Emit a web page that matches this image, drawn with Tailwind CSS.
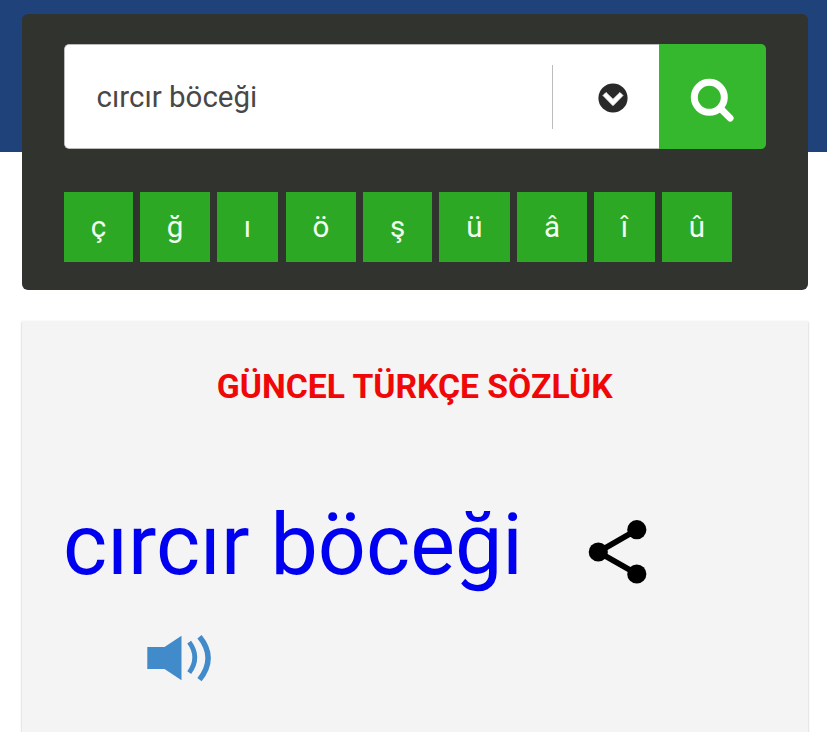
<!DOCTYPE html>
<html lang="tr">
<head>
<meta charset="utf-8">
<title>Güncel Türkçe Sözlük</title>
<script src="https://cdn.jsdelivr.net/npm/@tailwindcss/browser@4"></script>
</head>
<body class="h-[732px] overflow-hidden bg-white font-['Roboto',sans-serif]">
<div class="h-[152px] bg-[#1e4279]"></div>
<main class="-mt-[138px] ml-[21.5px] w-[786.5px]">
  <section class="relative h-[276px] rounded-[6px] bg-[#31332e] pl-[42.5px] pt-[30px]">
    <form class="flex h-[105px] w-[702px] overflow-hidden rounded-[5px]">
      <div class="flex w-[595px] items-center rounded-l-[5px] border border-r-0 border-[#bbb] bg-white">
        <span class="w-[487px] pl-[31.5px] text-[29.5px] leading-[40px] text-[#484848]">cırcır böceği</span>
        <span class="h-[64px] w-px bg-[#bcbcbc]"></span>
        <svg class="ml-[45px] mt-[3px]" width="30" height="30" viewBox="0 0 30 30"><circle cx="15" cy="15" r="14.6" fill="#292929"/><path d="M8 9.6 15 16.4l7-6.8 2.9 2.9L15 22.6 5.1 12.5z" fill="#fff" stroke="#fff" stroke-width="1" stroke-linejoin="round"/></svg>
      </div>
      <div class="w-[107px] bg-[#35b82e] pl-[30px] pt-[33px]">
        <svg width="48" height="48" viewBox="0 0 48 48" fill="none" stroke="#fff"><circle cx="20.3" cy="20.3" r="15" stroke-width="7"/><path d="m31.5 31.5 9.7 9.7" stroke-width="6.8" stroke-linecap="round"/></svg>
      </div>
    </form>
    <div class="mt-[43px] flex h-[70px] text-center text-[29.5px] leading-[70px] text-[#f0fff0]">
      <span class="mr-[7px] w-[69px] bg-[#2ca825]">ç</span>
      <span class="mr-[7px] w-[70px] bg-[#2ca825]">ğ</span>
      <span class="mr-[8px] w-[61px] bg-[#2ca825]">ı</span>
      <span class="mr-[7px] w-[70px] bg-[#2ca825]">ö</span>
      <span class="mr-[7px] w-[69px] bg-[#2ca825]">ş</span>
      <span class="mr-[7px] w-[71px] bg-[#2ca825]">ü</span>
      <span class="mr-[7px] w-[70px] bg-[#2ca825]">â</span>
      <span class="mr-[7px] w-[61px] bg-[#2ca825]">î</span>
      <span class="w-[70px] bg-[#2ca825]">û</span>
    </div>
  </section>
  <section class="mt-[31px] h-[430px] bg-[#f4f4f4] pt-[46px] shadow-[0_1px_2px_rgba(0,0,0,0.3)]">
    <h2 class="text-center text-[33.7px] font-bold leading-[40px] text-[#f00707]">GÜNCEL TÜRKÇE SÖZLÜK</h2>
    <div class="mt-[89px] flex h-[100px] pl-[41.5px]">
      <h1 class="w-[522.5px] whitespace-nowrap text-[84.4px] leading-[100px] text-[#0000f0]">cırcır böceği</h1>
      <svg class="mt-[22px]" width="62" height="68" viewBox="0 0 62 68"><path d="M51 11.7 12.3 34 51 56" fill="none" stroke="#000" stroke-width="5.8"/><circle cx="12.3" cy="34" r="9.6"/><circle cx="50.8" cy="11.7" r="9.6"/><circle cx="50.8" cy="56" r="9.6"/></svg>
    </div>
    <svg class="ml-[125.5px] mt-[36px]" width="66" height="50" viewBox="0 0 66 50"><path d="M.3 15h17.2L34.5 3.7v44.5L17.5 37H.3z" fill="#428bca"/><path d="M42.2 10.1q11.2 15.2 0 30.6" fill="none" stroke="#428bca" stroke-width="4.8"/><path d="M52.5 4.7q17.2 21 0 43" fill="none" stroke="#428bca" stroke-width="5.4"/></svg>
  </section>
</main>
</body>
</html>
